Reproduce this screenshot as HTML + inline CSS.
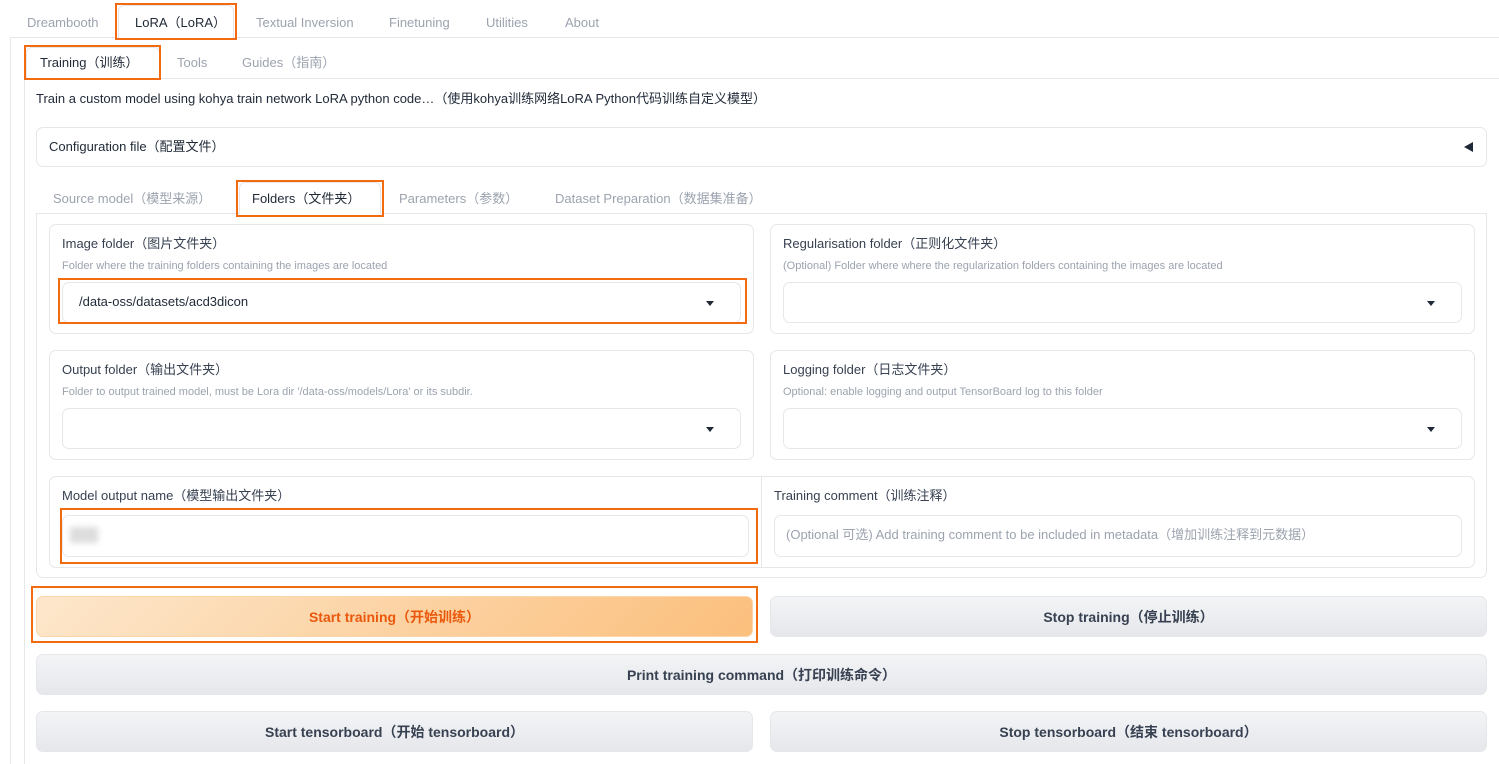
<!DOCTYPE html>
<html><head><meta charset="utf-8"><style>
*{box-sizing:border-box;margin:0;padding:0}
body{width:1499px;height:764px;background:#fff;font-family:"Liberation Sans","Noto Sans CJK SC",sans-serif;font-size:13px;line-height:16px;color:#374151;position:relative;overflow:hidden}
.a{position:absolute}
.t{position:absolute;white-space:nowrap}
.g{color:#9ca3af}
.ob{position:absolute;border:2px solid #f26b0f}
.box{position:absolute;border:1px solid #e5e7eb;border-radius:7px;background:#fff}
.inp{position:absolute;border:1px solid #e5e7eb;border-radius:7px;background:#fff}
.car{position:absolute;width:0;height:0;border-left:4px solid transparent;border-right:4px solid transparent;border-top:5px solid #1f2937}
.btn{position:absolute;border:1px solid #e5e7eb;border-radius:7px;background:linear-gradient(#f3f4f6,#e5e7eb);font-weight:bold;font-size:14px;color:#374151;display:flex;align-items:center;justify-content:center}
.sm{font-size:11px;color:#9ca3af}
</style></head><body>
<div class="a" style="left:10px;top:37px;width:1489px;height:727px;border-left:1px solid #e5e7eb;border-top:1px solid #e5e7eb"></div>
<div class="a" style="left:118px;top:5px;width:116px;height:33px;background:#fff;border:1px solid #e5e7eb;border-bottom:none;border-radius:6px 6px 0 0"></div>
<div class="t g" style="left:27px;top:15px">Dreambooth</div>
<div class="t" style="left:135px;top:15px;color:#1f2937">LoRA（LoRA）</div>
<div class="t g" style="left:256px;top:15px">Textual Inversion</div>
<div class="t g" style="left:389px;top:15px">Finetuning</div>
<div class="t g" style="left:486px;top:15px">Utilities</div>
<div class="t g" style="left:565px;top:15px">About</div>
<div class="ob" style="left:115px;top:3px;width:122px;height:37px"></div>
<div class="a" style="left:24px;top:78px;width:1475px;height:686px;border-left:1px solid #e5e7eb;border-top:1px solid #e5e7eb"></div>
<div class="a" style="left:26px;top:47px;width:134px;height:32px;background:#fff;border:1px solid #e5e7eb;border-bottom:none;border-radius:6px 6px 0 0"></div>
<div class="t" style="left:40px;top:55px;color:#1f2937">Training（训练）</div>
<div class="t g" style="left:177px;top:55px">Tools</div>
<div class="t g" style="left:242px;top:55px">Guides（指南）</div>
<div class="ob" style="left:24px;top:45px;width:137px;height:35px"></div>
<div class="t" style="left:36px;top:91px;color:#1f2937">Train a custom model using kohya train network LoRA python code…（使用kohya训练网络LoRA Python代码训练自定义模型）</div>
<div class="box" style="left:36px;top:127px;width:1451px;height:40px"></div>
<div class="t" style="left:49px;top:139px;color:#1f2937">Configuration file（配置文件）</div>
<div class="a" style="left:1464px;top:142px;width:0;height:0;border-top:5px solid transparent;border-bottom:5px solid transparent;border-right:9px solid #1f2937"></div>
<div class="a" style="left:36px;top:213px;width:1451px;height:365px;border:1px solid #e5e7eb;border-radius:0 0 7px 7px"></div>
<div class="a" style="left:239px;top:182px;width:142px;height:32px;background:#fff;border:1px solid #e5e7eb;border-bottom:none;border-radius:6px 6px 0 0"></div>
<div class="t g" style="left:53px;top:191px">Source model（模型来源）</div>
<div class="t" style="left:252px;top:191px;color:#1f2937">Folders（文件夹）</div>
<div class="t g" style="left:399px;top:191px">Parameters（参数）</div>
<div class="t g" style="left:555px;top:191px">Dataset Preparation（数据集准备）</div>
<div class="ob" style="left:236px;top:180px;width:148px;height:37px"></div>
<div class="box" style="left:49px;top:224px;width:705px;height:110px"></div>
<div class="t" style="left:62px;top:236px">Image folder（图片文件夹）</div>
<div class="t sm" style="left:62px;top:258px">Folder where the training folders containing the images are located</div>
<div class="inp" style="left:62px;top:282px;width:679px;height:41px"></div>
<div class="t" style="left:79px;top:294px;color:#1f2937">/data-oss/datasets/acd3dicon</div>
<div class="car" style="left:706px;top:301px"></div>
<div class="ob" style="left:58px;top:278px;width:689px;height:46px"></div>
<div class="box" style="left:770px;top:224px;width:705px;height:110px"></div>
<div class="t" style="left:783px;top:236px">Regularisation folder（正则化文件夹）</div>
<div class="t sm" style="left:783px;top:258px">(Optional) Folder where where the regularization folders containing the images are located</div>
<div class="inp" style="left:783px;top:282px;width:679px;height:41px"></div>
<div class="car" style="left:1427px;top:301px"></div>
<div class="box" style="left:49px;top:350px;width:705px;height:110px"></div>
<div class="t" style="left:62px;top:362px">Output folder（输出文件夹）</div>
<div class="t sm" style="left:62px;top:384px">Folder to output trained model, must be Lora dir '/data-oss/models/Lora' or its subdir.</div>
<div class="inp" style="left:62px;top:408px;width:679px;height:41px"></div>
<div class="car" style="left:706px;top:427px"></div>
<div class="box" style="left:770px;top:350px;width:705px;height:110px"></div>
<div class="t" style="left:783px;top:362px">Logging folder（日志文件夹）</div>
<div class="t sm" style="left:783px;top:384px">Optional: enable logging and output TensorBoard log to this folder</div>
<div class="inp" style="left:783px;top:408px;width:679px;height:41px"></div>
<div class="car" style="left:1427px;top:427px"></div>
<div class="box" style="left:49px;top:476px;width:1426px;height:92px"></div>
<div class="a" style="left:761px;top:477px;width:1px;height:90px;background:#e5e7eb"></div>
<div class="t" style="left:62px;top:488px">Model output name（模型输出文件夹）</div>
<div class="inp" style="left:62px;top:515px;width:687px;height:42px"></div>
<div class="a" style="left:70px;top:527px;width:28px;height:16px;background:#ddd;filter:blur(3px)"></div>
<div class="ob" style="left:60px;top:508px;width:698px;height:56px"></div>
<div class="t" style="left:774px;top:488px">Training comment（训练注释）</div>
<div class="inp" style="left:774px;top:515px;width:688px;height:42px"></div>
<div class="t g" style="left:786px;top:527px">(Optional 可选) Add training comment to be included in metadata（增加训练注释到元数据）</div>
<div class="btn" style="left:36px;top:596px;width:717px;height:41px;background:linear-gradient(135deg,#fde7cc,#fbbf7c);border-color:#fcd5a8;color:#ea580c;font-weight:600">Start training（开始训练）</div>
<div class="ob" style="left:31px;top:586px;width:727px;height:57px"></div>
<div class="btn" style="left:770px;top:596px;width:717px;height:41px">Stop training（停止训练）</div>
<div class="btn" style="left:36px;top:654px;width:1451px;height:41px">Print training command（打印训练命令）</div>
<div class="btn" style="left:36px;top:711px;width:717px;height:41px">Start tensorboard（开始 tensorboard）</div>
<div class="btn" style="left:770px;top:711px;width:717px;height:41px">Stop tensorboard（结束 tensorboard）</div>
</body></html>
